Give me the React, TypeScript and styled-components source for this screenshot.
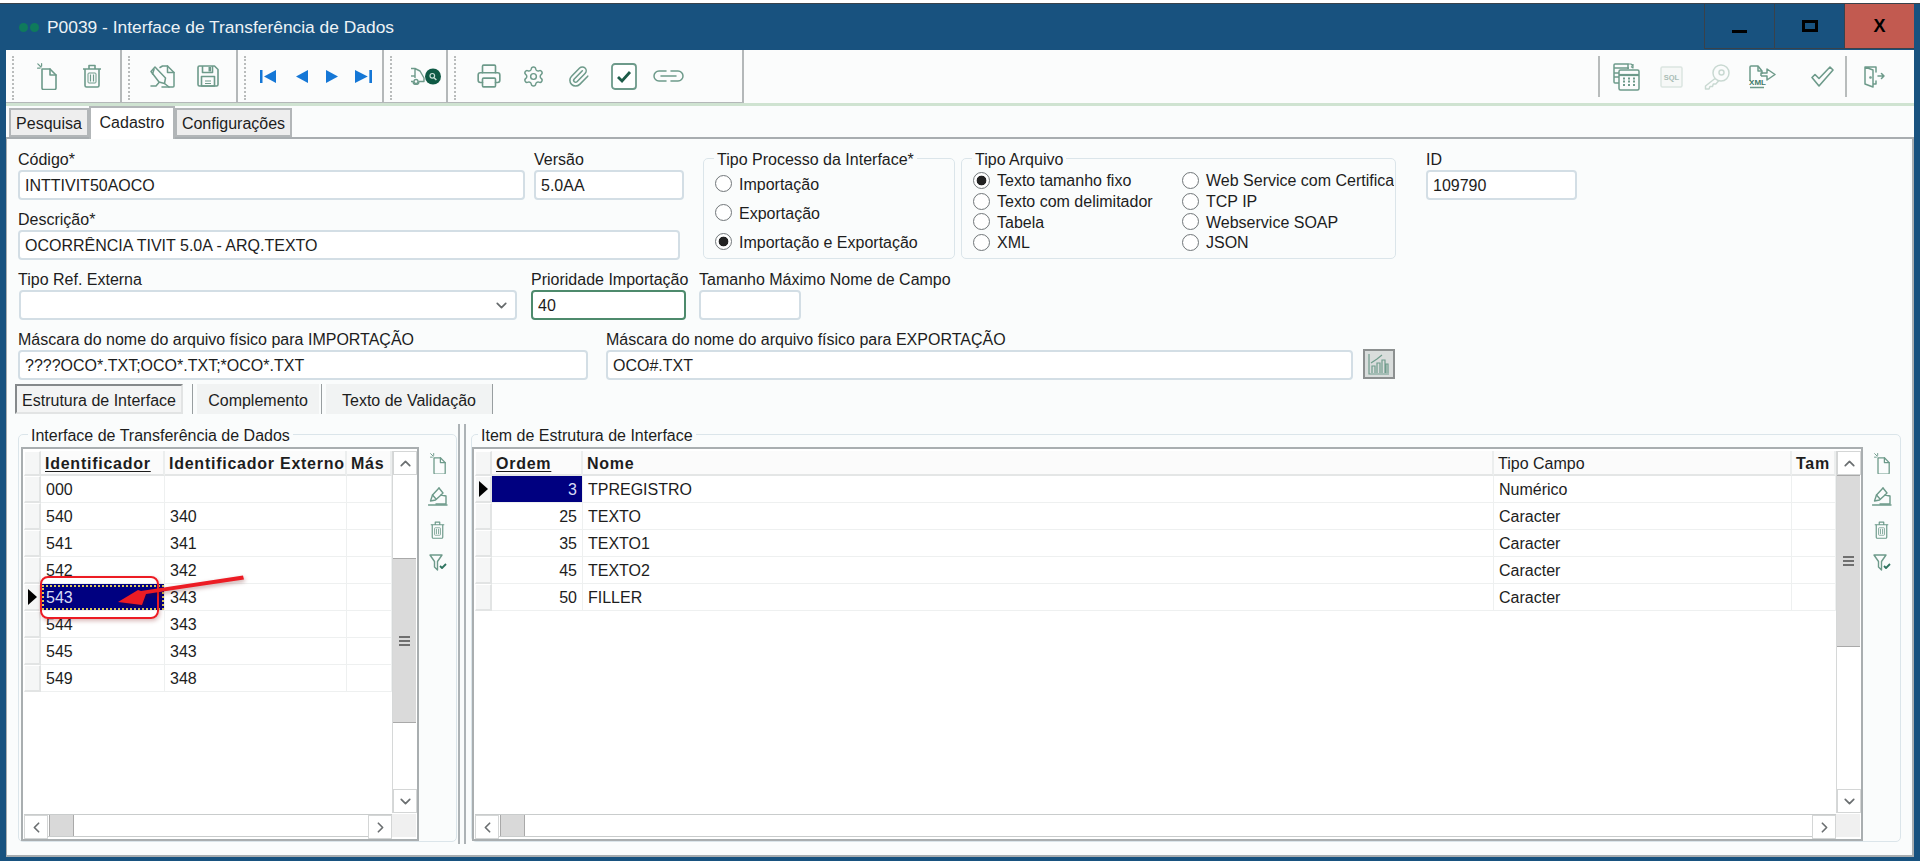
import React, { ReactElement } from 'react';
import styled, { createGlobalStyle } from 'styled-components';
import { ChevronDown, ChevronLeft, ChevronRight, ChevronUp, Paperclip, Printer, Settings } from 'lucide-react';

const GlobalStyle = createGlobalStyle`
  html, body {
    margin: 0;
    height: 861px;
    overflow: hidden;
    background: #ffffff;
  }
  * { box-sizing: border-box; }
`;

const GREEN = '#6d9a8a';
const PALE = '#c9d9d2';

const Screen = styled.div`
  position: relative;
  width: 1920px;
  height: 861px;
  padding-top: 3px;
  background: #ffffff;
  overflow: hidden;
  font-family: "Liberation Sans", Arial, sans-serif;
  font-size: 16px;
  color: #1d1d1d;
`;

const Window = styled.div`
  height: 858px;
  display: flex;
  flex-direction: column;
  background: #18527f;
  border-top: 1px solid #39424b;
  padding-bottom: 4px;
`;

const TitleBar = styled.div`
  height: 46px;
  flex: none;
  display: flex;
  align-items: center;
  padding-left: 19px;
  width: 1914px;
`;

const TitleDot = styled.span`
  width: 9px;
  height: 9px;
  border-radius: 50%;
  background: #0f7a5c;
  margin-right: 2px;
`;

const TitleText = styled.div`
  margin-left: 6px;
  font-size: 17.4px;
  color: #edf2f6;
  padding-top: 1px;
`;

const WindowButtons = styled.div`
  margin-left: auto;
  display: flex;
  height: 45px;
  align-self: flex-start;
`;

const WindowButton = styled.div<{ $close?: boolean }>`
  width: 70px;
  height: 45px;
  display: flex;
  align-items: center;
  justify-content: center;
  border-left: 1px solid #39424b;
  border-bottom: 1px solid #39424b;
  background: ${(p) => (p.$close ? '#c25a50' : 'transparent')};
  color: #000000;
  font-weight: 700;
  font-size: 18px;
`;

const MinGlyph = styled.span`
  width: 15px;
  height: 3px;
  margin-top: 10px;
  background: #000000;
`;

const MaxGlyph = styled.span`
  width: 16px;
  height: 12px;
  border: 3px solid #000000;
`;

const Body = styled.div`
  flex: 1;
  margin: 0 6px;
  display: flex;
  flex-direction: column;
  background: #fafcfc;
`;

const Toolbar = styled.div`
  height: 53px;
  flex: none;
  display: flex;
  background: #fbfcfc;
`;

const ToolGroup = styled.div<{ $w: number }>`
  width: ${(p) => p.$w}px;
  display: flex;
  align-items: center;
  border-right: 2px solid #b4b8b9;
  border-bottom: 1px solid #b4b8b9;
  padding-left: 6px;
`;

const Handle = styled.span<{ $gap: number }>`
  height: 44px;
  margin-top: 3px;
  width: 2px;
  border-left: 2px dotted #b9bcbc;
  margin-right: ${(p) => p.$gap}px;
`;

const ToolButton = styled.div<{ $w?: number; $pale?: boolean }>`
  width: ${(p) => p.$w ?? 45}px;
  height: 100%;
  flex: none;
  display: flex;
  align-items: center;
  justify-content: center;
  color: ${(p) => (p.$pale ? PALE : GREEN)};
`;

const ToolRight = styled.div`
  margin-left: auto;
  display: flex;
  align-items: center;
  padding-right: 17px;
`;

const ToolDivider = styled.span<{ $after: number }>`
  width: 2px;
  height: 41px;
  background: #b8bcbc;
  margin-right: ${(p) => p.$after}px;
`;

const ToolSpacer = styled.span<{ $w: number }>`
  width: ${(p) => p.$w}px;
`;

const GreenLine = styled.div`
  height: 3px;
  flex: none;
  background: #cfe3d1;
`;

const TabStrip = styled.div`
  height: 31px;
  flex: none;
  display: flex;
  align-items: flex-end;
  padding-left: 3px;
  background: #fafcfc;
  position: relative;
  z-index: 1;
`;

const Tab = styled.div<{ $active?: boolean; $w: number }>`
  width: ${(p) => p.$w}px;
  height: ${(p) => (p.$active ? '33px' : '29px')};
  margin-bottom: ${(p) => (p.$active ? '-2px' : '0')};
  display: flex;
  align-items: ${(p) => (p.$active ? 'flex-start' : 'center')};
  justify-content: center;
  padding-top: ${(p) => (p.$active ? '6px' : '3px')};
  border: 2px solid #b2b6b8;
  border-bottom: ${(p) => (p.$active ? 'none' : '2px solid #b2b6b8')};
  background: ${(p) => (p.$active ? '#ffffff' : '#eeeeee')};
`;

const Page = styled.div`
  flex: 1;
  display: flex;
  flex-direction: column;
  border: 2px solid #a8adb0;
  border-left-width: 1px;
  background: #fafcfc;
  padding: 10px 0 0 11px;
  min-height: 0;
`;

const FormTop = styled.div`
  display: flex;
  align-items: flex-start;
`;

const LeftColumn = styled.div`
  width: 664px;
  display: flex;
  flex-direction: column;
  gap: 9px;
`;

const FormRow = styled.div<{ $gap?: number; $top?: number }>`
  display: flex;
  gap: ${(p) => p.$gap ?? 9}px;
  margin-top: ${(p) => p.$top ?? 0}px;
`;

const Field = styled.div<{ $w: number; $left?: number }>`
  width: ${(p) => p.$w}px;
  margin-left: ${(p) => p.$left ?? 0}px;
  flex: none;
  display: flex;
  flex-direction: column;
  gap: 3px;
`;

const Label = styled.label`
  height: 18px;
  line-height: 21px;
  white-space: nowrap;
`;

const TextBox = styled.input<{ $focus?: boolean }>`
  width: 100%;
  height: 30px;
  padding: 2px 5px 0;
  margin: 0;
  font: inherit;
  color: #1d1d1d;
  outline: none;
  background: #ffffff;
  border: ${(p) => (p.$focus ? '2px solid #4d8a6c' : '2px solid #d3dee5')};
  border-radius: 4px;
`;

const SelectBox = styled.div`
  height: 30px;
  margin-left: 1px;
  display: flex;
  align-items: center;
  justify-content: flex-end;
  padding-right: 5px;
  background: #ffffff;
  border: 2px solid #d3dee5;
  border-radius: 4px;
  color: #666a6c;
`;

const ChartButton = styled.div<{ $left: number }>`
  width: 32px;
  height: 30px;
  flex: none;
  align-self: flex-end;
  margin: 0 0 1px ${(p) => p.$left}px;
  display: flex;
  align-items: center;
  justify-content: center;
  background: #d9dddc;
  border: 2px solid #8c9090;
`;

const Group = styled.fieldset<{ $w: number; $left: number }>`
  width: ${(p) => p.$w}px;
  height: 110px;
  flex: none;
  margin: 0 0 0 ${(p) => p.$left}px;
  padding: 2px 0 0 11px;
  border: 1.5px solid #dbe5ea;
  border-radius: 5px;
  min-width: 0;
  overflow: hidden;
`;

const Legend = styled.legend<{ $left?: number }>`
  height: 18px;
  line-height: 21px;
  padding: 0 3px;
  margin-left: ${(p) => p.$left ?? 8}px;
`;

const RadioRow = styled.div<{ $h: number }>`
  height: ${(p) => p.$h}px;
  display: flex;
  align-items: center;
  gap: 7px;
  white-space: nowrap;
  overflow: hidden;
`;

const RadioText = styled.span`
  padding-top: 2px;
`;

const RadioGrid = styled.div`
  display: grid;
  grid-template-columns: 209px 212px;
  grid-auto-rows: 20.7px;
  padding-top: 1px;
`;

const Radio = styled.span<{ $on?: boolean }>`
  width: 17px;
  height: 17px;
  flex: none;
  border-radius: 50%;
  border: 1px solid #72777a;
  background: radial-gradient(circle, ${(p) => (p.$on ? '#222 0 4.5px, #fff 5.2px' : '#fff 0 60%, #f0f0f0 100%')});
`;

const InnerTabs = styled.div`
  height: 30px;
  flex: none;
  margin: 4px 0 0 -3px;
  display: flex;
`;

const InnerTab = styled.div<{ $w: number; $left: number; $active?: boolean }>`
  width: ${(p) => p.$w}px;
  margin-left: ${(p) => p.$left}px;
  padding-top: 3px;
  display: flex;
  align-items: center;
  justify-content: center;
  background: ${(p) => (p.$active ? '#f3f4f4' : '#f1f3f3')};
  border-top: ${(p) => (p.$active ? '2px solid #85898b' : 'none')};
  border-left: ${(p) => (p.$active ? '2px solid #85898b' : 'none')};
  border-bottom: ${(p) => (p.$active ? '2px solid #e2e4e4' : 'none')};
  border-right: ${(p) => (p.$active ? '2px solid #e2e4e4' : 'none')};
`;

const InnerSep = styled.span<{ $left: number }>`
  width: 1px;
  flex: none;
  margin-left: ${(p) => p.$left}px;
  background: #989ea0;
`;

const Panes = styled.div`
  margin-top: 11px;
  height: 417px;
  display: flex;
`;

const Pane = styled.fieldset<{ $w: number; $pad: number }>`
  width: ${(p) => p.$w}px;
  height: 417px;
  flex: none;
  margin: 0;
  min-width: 0;
  padding: 4px 0 0 ${(p) => p.$pad}px;
  border: 1.5px solid #dbe5ea;
  border-radius: 5px;
  display: flex;
`;

const Splitter = styled.div`
  width: 8px;
  height: 420px;
  flex: none;
  margin: -1px 5px 0 1px;
  border-left: 2px solid #adb3b6;
  border-right: 2px solid #adb3b6;
`;

const Grid = styled.div<{ $w: number }>`
  width: ${(p) => p.$w}px;
  height: 394px;
  flex: none;
  display: grid;
  grid-template-columns: 1fr 24px;
  grid-template-rows: 1fr 24px;
  border: 2px solid #a9aeb0;
  padding: 2px 1px 2px 1px;
  background: #ffffff;
`;

const TableArea = styled.div`
  overflow: hidden;
  min-height: 0;
  background: #ffffff;
`;

const TableRow = styled.div<{ $h: number }>`
  height: ${(p) => p.$h}px;
  display: flex;
`;

const Indicator = styled.div`
  width: 17px;
  flex: none;
  display: flex;
  align-items: center;
  justify-content: center;
  background: #f5f6f6;
  border-top: 1px solid #ffffff;
  border-left: 1px solid #ffffff;
  border-bottom: 2px solid #e2e4e4;
  border-right: 2px solid #e2e4e4;
`;

const RowArrow = styled.span`
  width: 0;
  height: 0;
  border-top: 8px solid transparent;
  border-bottom: 8px solid transparent;
  border-left: 9px solid #000000;
`;

const Cell = styled.div<{ $w: number; $right?: boolean; $sel?: boolean; $focus?: boolean }>`
  width: ${(p) => p.$w}px;
  flex: none;
  display: flex;
  align-items: center;
  justify-content: ${(p) => (p.$right ? 'flex-end' : 'flex-start')};
  padding: 2px 5px 0;
  white-space: nowrap;
  overflow: hidden;
  color: ${(p) => (p.$sel ? '#d8dcf5' : '#1d1d1d')};
  background: ${(p) => (p.$sel ? '#000080' : '#ffffff')};
  border-right: 1px solid #eef0f0;
  border-bottom: 1px solid #eef0f0;
  outline: ${(p) => (p.$focus ? '2px dotted #d9c65a' : 'none')};
  outline-offset: -3px;
`;

const HeadCell = styled.div<{ $w: number; $bold?: boolean; $sorted?: boolean }>`
  width: ${(p) => p.$w}px;
  flex: none;
  display: flex;
  align-items: center;
  padding: 2px 4px 0;
  white-space: nowrap;
  overflow: hidden;
  background: #fbfbfb;
  font-weight: ${(p) => (p.$bold ? 700 : 400)};
  letter-spacing: ${(p) => (p.$bold ? '0.75px' : '0')};
  text-decoration: ${(p) => (p.$sorted ? 'underline' : 'none')};
  text-underline-offset: 2px;
  border-right: 2px solid #eceeee;
  border-bottom: 2px solid #e4e6e6;
`;

const VScroll = styled.div`
  display: flex;
  flex-direction: column;
  border-left: 1px solid #d6d8d8;
  min-height: 0;
`;

const HScroll = styled.div`
  display: flex;
  margin-top: 1px;
  border-top: 1px solid #c9cccc;
  border-bottom: 1px solid #c9cccc;
`;

const ScrollButton = styled.div`
  width: 24px;
  height: 24px;
  flex: none;
  display: flex;
  align-items: center;
  justify-content: center;
  background: #ffffff;
  color: #6b6f71;
  border: 1px solid #d4d6d6;
`;

const VThumb = styled.div<{ $h: number; $top: number }>`
  height: ${(p) => p.$h}px;
  margin-top: ${(p) => p.$top}px;
  flex: none;
  display: flex;
  align-items: center;
  justify-content: center;
  background: #dadada;
  border-top: 1px solid #a9a9a9;
  border-bottom: 1px solid #a9a9a9;
`;

const HThumb = styled.div`
  width: 25px;
  height: 100%;
  flex: none;
  margin-left: 1px;
  background: #d9d9d9;
  border-left: 1px solid #a9a9a9;
  border-right: 1px solid #a9a9a9;
`;

const Track = styled.div`
  flex: 1;
`;

const Grabber = styled.span`
  width: 11px;
  height: 10px;
  border-top: 2px solid #6f6f6f;
  border-bottom: 2px solid #6f6f6f;
  background: linear-gradient(#6f6f6f, #6f6f6f) center / 100% 2px no-repeat;
`;

const Corner = styled.div`
  background: #f0f0f0;
  margin-top: 1px;
`;

const SideTools = styled.div`
  flex: 1;
  display: flex;
  flex-direction: column;
  align-items: center;
  color: ${GREEN};
`;

const SideTool = styled.div`
  height: 33px;
  display: flex;
  align-items: center;
  justify-content: center;
`;

const RedBox = styled.div`
  position: absolute;
  left: 40px;
  top: 576px;
  width: 119px;
  height: 43px;
  border: 2px solid #ec1c24;
  border-radius: 8px;
  box-shadow: 1px 2px 4px rgba(120, 0, 0, 0.28);
`;

const RedArrow = styled.svg`
  position: absolute;
  left: 110px;
  top: 565px;
  filter: drop-shadow(1px 2px 2px rgba(90, 0, 0, 0.35));
`;

type IconProps = { w: number; color?: string };

const NewIcon = ({ w, color = GREEN }: IconProps) => (
  <svg width={w} viewBox="0 0 20 27" fill="none" stroke={color} strokeWidth="1.6" strokeLinejoin="round" strokeLinecap="round">
    <path d="M5 6h8l6 6v13a1.5 1.5 0 0 1-1.5 1.5h-11A1.5 1.5 0 0 1 5 25z" />
    <path d="M13 6v6h6" />
    <path d="M.8.8 4 4M4.6.6V3M.6 5.2H3" strokeWidth="1.2" />
  </svg>
);

const TrashIcon = ({ w, color = GREEN }: IconProps) => (
  <svg width={w} viewBox="0 0 20 24" fill="none" stroke={color} strokeWidth="1.6" strokeLinejoin="round">
    <path d="M1 5h18M7 5V1.5h6V5" />
    <path d="M3 5v16.5A1.5 1.5 0 0 0 4.5 23h11a1.5 1.5 0 0 0 1.5-1.5V5" />
    <rect x="6" y="9" width="8" height="10" rx="1" strokeWidth="1" />
    <path d="M8.5 10.5v7M11.5 10.5v7" strokeWidth="1.2" />
  </svg>
);

const EditIcon = ({ w, color = GREEN }: IconProps) => (
  <svg width={w} viewBox="0 0 25 23" fill="none" stroke={color} strokeWidth="1.5" strokeLinejoin="round" strokeLinecap="round">
    <path d="M10 2.5 12.5 1h5L24 7.5V21a1 1 0 0 1-1 1H12" />
    <path d="M17.5 1v6.5H24" />
    <path d="M1 6.5 5 2l10.5 11-1 5.5-5.5-1.5z" />
    <path d="M4 4.5 2.5 9M9 17.5 6 21H1" />
    <path d="M14.5 18.5 19 22" />
  </svg>
);

const SideEditIcon = ({ w, color = GREEN }: IconProps) => (
  <svg width={w} viewBox="0 0 20 19" fill="none" stroke={color} strokeWidth="1.4" strokeLinejoin="round" strokeLinecap="round">
    <path d="M11 1 15 6l-2 2 5 1v8H8" />
    <path d="M11 1 4.5 8 2.5 14l5-1L13 8" />
    <path d="M4.5 8 8 12M.5 18H19" />
  </svg>
);

const SaveIcon = ({ w, color = GREEN }: IconProps) => (
  <svg width={w} viewBox="0 0 22 22" fill="none" stroke={color} strokeWidth="1.6" strokeLinejoin="round">
    <path d="M1 2.5A1.5 1.5 0 0 1 2.5 1h15L21 4.5v15a1.5 1.5 0 0 1-1.5 1.5h-17A1.5 1.5 0 0 1 1 19.5z" />
    <path d="M5.5 1v6.5h10V1" />
    <rect x="11.5" y="2" width="2.5" height="4.5" fill={color} stroke="none" />
    <rect x="4.5" y="11.5" width="13" height="9.5" />
    <path d="M8 16h6M8 18.5h6" strokeWidth="1" />
  </svg>
);

const Nav = ({ w, d }: { w: number; d: string }) => (
  <svg width={w} height="13" viewBox="0 0 16 13" fill="#1577d6" preserveAspectRatio="none">
    <path d={d} />
  </svg>
);

const SearchCartIcon = () => (
  <svg width="31" height="18" viewBox="0 0 31 18" fill="none" stroke={GREEN} strokeWidth="1.4" strokeLinejoin="round">
    <path d="M1 1.5h4l5 2.5 4 7v3.5H9a3 3 0 0 1-6 0H1M5 1.5V11" />
    <circle cx="6" cy="14.5" r="2" />
    <path d="M1 9h4" />
    <circle cx="23" cy="9.5" r="8" fill="#0f5a45" stroke="none" />
    <circle cx="22.3" cy="8.8" r="2.3" stroke="#c7ded6" strokeWidth="1.2" />
    <path d="m24 10.7 2.4 2.4" stroke="#c7ded6" strokeWidth="1.4" />
  </svg>
);

const CheckBoxIcon = () => (
  <svg width="26" height="27" viewBox="0 0 26 27" fill="none">
    <rect x="1" y="1" width="24" height="25" rx="3" stroke={GREEN} strokeWidth="1.8" fill="#ffffff" />
    <path d="m7 14 4 4 8-9" stroke="#1c5b48" strokeWidth="2.8" />
  </svg>
);

const LinkIcon = () => (
  <svg width="31" height="12" viewBox="0 0 31 12" fill="none" stroke={GREEN} strokeWidth="1.5" strokeLinecap="round">
    <path d="M13 1H6a5 5 0 0 0 0 10h7M18 1h7a5 5 0 0 1 0 10h-7M8 6h15" />
  </svg>
);

const TableIcon = () => (
  <svg width="27" height="28" viewBox="0 0 27 28" fill="none" stroke={GREEN} strokeWidth="1.5" strokeLinejoin="round">
    <path d="M6 20H2a1 1 0 0 1-1-1V2a1 1 0 0 1 1-1h13v5" />
    <path d="M1 5h15M1 10h5M1 14h5" />
    <path d="M15 1h3l2 2M20 1v4l-2-1.5" strokeWidth="1.2" />
    <rect x="6" y="7" width="20" height="20" rx="1.5" />
    <path d="M6 12h20" strokeWidth="2.2" />
    <path d="M10 15.5h2M15 15.5h2M20 15.5h2M10 18.5h2M15 18.5h2M20 18.5h2M10 22h2M15 22h2M20 22h2" strokeWidth="2.2" />
  </svg>
);

const SqlIcon = () => (
  <svg width="23" height="22" viewBox="0 0 23 22" fill="none">
    <rect x="1" y="1" width="21" height="20" rx="1.5" stroke="#dbe5e1" strokeWidth="1.5" fill="#f6f8f7" />
    <text x="11.5" y="14" textAnchor="middle" fontSize="7.5" fontWeight="700" fontFamily="Liberation Sans, sans-serif" fill="#a9bdb5">SQL</text>
  </svg>
);

const KeyIcon = () => (
  <svg width="26" height="26" viewBox="0 0 26 26" fill="none" stroke={PALE} strokeWidth="1.5" strokeLinejoin="round">
    <circle cx="17" cy="9" r="8" />
    <circle cx="17.5" cy="8.5" r="2.5" />
    <path d="M11 14.5 1.5 22v3h3.5l1-2.5h2.5l.8-2.5h2.5l3.2-3.5" />
  </svg>
);

const XmlIcon = () => (
  <svg width="29" height="24" viewBox="0 0 29 24" fill="none" stroke={GREEN} strokeWidth="1.5" strokeLinejoin="round">
    <path d="M3 16V2a1 1 0 0 1 1-1h7l4 5v3M3 22.5h14" />
    <path d="M11 1v5h4" />
    <path d="M14 11V8h6V4l8 5.5-8 5.5v-4h-6" />
    <text x="10.5" y="20" textAnchor="middle" fontSize="8" fontWeight="700" fontFamily="Liberation Sans, sans-serif" fill="#3f7a68" stroke="none">XML</text>
  </svg>
);

const OutlineCheckIcon = () => (
  <svg width="23" height="21" viewBox="0 0 23 21" fill="none" stroke={GREEN} strokeWidth="1.6" strokeLinejoin="round">
    <path d="M1 11.5 4 8.5l4 4L19 1l3 3L8 20z" />
  </svg>
);

const DoorIcon = () => (
  <svg width="21" height="22" viewBox="0 0 21 22" fill="none" stroke={GREEN} strokeWidth="1.5" strokeLinejoin="round" strokeLinecap="round">
    <path d="M1 1v17l8 3V4zM1 1h11v5M9 18h3v-3" />
    <path d="M14 10h6M17.5 7.5 20 10l-2.5 2.5" />
    <circle cx="6.5" cy="11.5" r=".6" />
  </svg>
);

const FilterIcon = ({ w, color = GREEN }: IconProps) => (
  <svg width={w} viewBox="0 0 18 17" fill="none" stroke={color} strokeWidth="1.4" strokeLinejoin="round">
    <path d="M1 1h12L8.5 7.5V16L5.5 13V7.5z" />
    <path d="m11 12 2 2 4-4" stroke="#2f7460" strokeWidth="1.8" />
  </svg>
);

const ChartIcon = () => (
  <svg width="22" height="22" viewBox="0 0 22 22" fill="none" stroke="#6f9c8c" strokeWidth="1.2">
    <path d="M1 1v20h20" />
    <path d="M4 20v-7h3v7M9 20V10h3v10M14 20V7h3v13M18 20v-9h2v9M3 10l6-4 5-4" />
  </svg>
);

const ScrollV = ({ thumbTop, thumbH }: { thumbTop: number; thumbH: number }) => (
  <VScroll>
    <ScrollButton><ChevronUp size={17} strokeWidth={2.4} /></ScrollButton>
    <VThumb $top={thumbTop} $h={thumbH}><Grabber /></VThumb>
    <Track />
    <ScrollButton><ChevronDown size={17} strokeWidth={2.4} /></ScrollButton>
  </VScroll>
);

const ScrollH = () => (
  <HScroll>
    <ScrollButton><ChevronLeft size={17} strokeWidth={2.4} /></ScrollButton>
    <HThumb />
    <Track />
    <ScrollButton><ChevronRight size={17} strokeWidth={2.4} /></ScrollButton>
  </HScroll>
);

const Side = () => (
  <SideTools>
    <SideTool><NewIcon w={16} /></SideTool>
    <SideTool><SideEditIcon w={20} /></SideTool>
    <SideTool><TrashIcon w={15} /></SideTool>
    <SideTool><FilterIcon w={18} /></SideTool>
  </SideTools>
);

const leftRows = [['000', ''], ['540', '340'], ['541', '341'], ['542', '342'], ['543', '343'], ['544', '343'], ['545', '343'], ['549', '348']];
const rightRows = [
  ['3', 'TPREGISTRO', 'Numérico'],
  ['25', 'TEXTO', 'Caracter'],
  ['35', 'TEXTO1', 'Caracter'],
  ['45', 'TEXTO2', 'Caracter'],
  ['50', 'FILLER', 'Caracter'],
];
const process = ['Importação', 'Exportação', 'Importação e Exportação'];
const fileTypes = ['Texto tamanho fixo', 'Web Service com Certifica', 'Texto com delimitador', 'TCP IP', 'Tabela', 'Webservice SOAP', 'XML', 'JSON'];

export default function App(): ReactElement {
  return (
    <Screen>
      <GlobalStyle />
      <Window>
        <TitleBar>
          <TitleDot />
          <TitleDot />
          <TitleText>P0039 - Interface de Transferência de Dados</TitleText>
          <WindowButtons>
            <WindowButton><MinGlyph /></WindowButton>
            <WindowButton><MaxGlyph /></WindowButton>
            <WindowButton $close>X</WindowButton>
          </WindowButtons>
        </TitleBar>
        <Body>
          <Toolbar>
            <ToolGroup $w={116}>
              <Handle $gap={10} />
              <ToolButton><NewIcon w={20} /></ToolButton>
              <ToolButton><TrashIcon w={20} /></ToolButton>
            </ToolGroup>
            <ToolGroup $w={116}>
              <Handle $gap={10} />
              <ToolButton><EditIcon w={25} /></ToolButton>
              <ToolButton><SaveIcon w={22} /></ToolButton>
            </ToolGroup>
            <ToolGroup $w={146}>
              <Handle $gap={5} />
              <ToolButton $w={34}><Nav w={16} d="M0 0h2.5v13H0zM16 0v13L4 6.5z" /></ToolButton>
              <ToolButton $w={34}><Nav w={12} d="M16 0v13L0 6.5z" /></ToolButton>
              <ToolButton $w={26}><Nav w={12} d="M0 0v13l16-6.5z" /></ToolButton>
              <ToolButton $w={36}><Nav w={17} d="M0 0v13l12-6.5zM13.5 0H16v13h-2.5z" /></ToolButton>
            </ToolGroup>
            <ToolGroup $w={64}>
              <Handle $gap={14} />
              <ToolButton $w={38}><SearchCartIcon /></ToolButton>
            </ToolGroup>
            <ToolGroup $w={296}>
              <Handle $gap={10} />
              <ToolButton><Printer size={26} strokeWidth={1.5} /></ToolButton>
              <ToolButton><Settings size={23} strokeWidth={1.5} /></ToolButton>
              <ToolButton><Paperclip size={23} strokeWidth={1.6} /></ToolButton>
              <ToolButton><CheckBoxIcon /></ToolButton>
              <ToolButton><LinkIcon /></ToolButton>
            </ToolGroup>
            <ToolRight>
              <ToolDivider $after={4} />
              <ToolButton><TableIcon /></ToolButton>
              <ToolButton><SqlIcon /></ToolButton>
              <ToolButton $pale><KeyIcon /></ToolButton>
              <ToolButton><XmlIcon /></ToolButton>
              <ToolSpacer $w={16} />
              <ToolButton><OutlineCheckIcon /></ToolButton>
              <ToolDivider $after={5} />
              <ToolButton><DoorIcon /></ToolButton>
            </ToolRight>
          </Toolbar>
          <GreenLine />
          <TabStrip>
            <Tab $w={80}>Pesquisa</Tab>
            <Tab $w={86} $active>Cadastro</Tab>
            <Tab $w={117}>Configurações</Tab>
          </TabStrip>
          <Page>
            <FormTop>
              <LeftColumn>
                <FormRow>
                  <Field $w={507}>
                    <Label>Código*</Label>
                    <TextBox readOnly value="INTTIVIT50AOCO" />
                  </Field>
                  <Field $w={150}>
                    <Label>Versão</Label>
                    <TextBox readOnly value="5.0AA" />
                  </Field>
                </FormRow>
                <FormRow>
                  <Field $w={662}>
                    <Label>Descrição*</Label>
                    <TextBox readOnly value="OCORRÊNCIA TIVIT 5.0A - ARQ.TEXTO" />
                  </Field>
                </FormRow>
              </LeftColumn>
              <Group $w={252} $left={21}>
                <Legend $left={-1}>Tipo Processo da Interface*</Legend>
                {process.map((t, i) => (
                  <RadioRow key={t} $h={29}>
                    <Radio $on={i === 2} />
                    <RadioText>{t}</RadioText>
                  </RadioRow>
                ))}
              </Group>
              <Group $w={435} $left={6}>
                <Legend $left={-1}>Tipo Arquivo</Legend>
                <RadioGrid>
                  {fileTypes.map((t, i) => (
                    <RadioRow key={t} $h={20.7}>
                      <Radio $on={i === 0} />
                      <RadioText>{t}</RadioText>
                    </RadioRow>
                  ))}
                </RadioGrid>
              </Group>
              <Field $w={151} $left={30}>
                <Label>ID</Label>
                <TextBox readOnly value="109790" />
              </Field>
            </FormTop>
            <FormRow $gap={14} $top={9}>
              <Field $w={499}>
                <Label>Tipo Ref. Externa</Label>
                <SelectBox><ChevronDown size={17} strokeWidth={2.4} /></SelectBox>
              </Field>
              <Field $w={155}>
                <Label>Prioridade Importação</Label>
                <TextBox $focus readOnly value="40" />
              </Field>
              <Field $w={102} $left={-1}>
                <Label>Tamanho Máximo Nome de Campo</Label>
                <TextBox readOnly value="" />
              </Field>
            </FormRow>
            <FormRow $gap={18} $top={9}>
              <Field $w={570}>
                <Label>Máscara do nome do arquivo físico para IMPORTAÇÃO</Label>
                <TextBox readOnly value="????OCO*.TXT;OCO*.TXT;*OCO*.TXT" />
              </Field>
              <Field $w={747}>
                <Label>Máscara do nome do arquivo físico para EXPORTAÇÃO</Label>
                <TextBox readOnly value="OCO#.TXT" />
              </Field>
              <ChartButton $left={-8}><ChartIcon /></ChartButton>
            </FormRow>
            <InnerTabs>
              <InnerTab $w={168} $left={0} $active>Estrutura de Interface</InnerTab>
              <InnerSep $left={9} />
              <InnerTab $w={122} $left={4}>Complemento</InnerTab>
              <InnerSep $left={2} />
              <InnerTab $w={166} $left={4}>Texto de Validação</InnerTab>
              <InnerSep $left={0} />
            </InnerTabs>
            <Panes>
              <Pane $w={439} $pad={2}>
                <Legend $left={7}>Interface de Transferência de Dados</Legend>
                <Grid $w={398}>
                  <TableArea>
                    <TableRow $h={25}>
                      <Indicator />
                      <HeadCell $w={124} $bold $sorted>Identificador</HeadCell>
                      <HeadCell $w={182} $bold>Identificador Externo</HeadCell>
                      <HeadCell $w={45} $bold>Más</HeadCell>
                    </TableRow>
                    {leftRows.map(([a, b], i) => (
                      <TableRow key={a} $h={27}>
                        <Indicator>{i === 4 && <RowArrow />}</Indicator>
                        <Cell $w={124} $sel={i === 4} $focus={i === 4}>{a}</Cell>
                        <Cell $w={182}>{b}</Cell>
                        <Cell $w={45} />
                      </TableRow>
                    ))}
                  </TableArea>
                  <ScrollV thumbTop={83} thumbH={165} />
                  <ScrollH />
                  <Corner />
                </Grid>
                <Side />
              </Pane>
              <Splitter />
              <Pane $w={1430} $pad={0}>
                <Legend $left={6}>Item de Estrutura de Interface</Legend>
                <Grid $w={1391}>
                  <TableArea>
                    <TableRow $h={25}>
                      <Indicator />
                      <HeadCell $w={91} $bold $sorted>Ordem</HeadCell>
                      <HeadCell $w={911} $bold>Nome</HeadCell>
                      <HeadCell $w={298}>Tipo Campo</HeadCell>
                      <HeadCell $w={44} $bold>Tam</HeadCell>
                    </TableRow>
                    {rightRows.map(([o, n, t], i) => (
                      <TableRow key={n} $h={27}>
                        <Indicator>{i === 0 && <RowArrow />}</Indicator>
                        <Cell $w={91} $right $sel={i === 0}>{o}</Cell>
                        <Cell $w={911}>{n}</Cell>
                        <Cell $w={298}>{t}</Cell>
                        <Cell $w={44} />
                      </TableRow>
                    ))}
                  </TableArea>
                  <ScrollV thumbTop={0} thumbH={172} />
                  <ScrollH />
                  <Corner />
                </Grid>
                <Side />
              </Pane>
            </Panes>
          </Page>
        </Body>
      </Window>
      <RedBox />
      <RedArrow width="140" height="50" viewBox="0 0 140 50">
        <path d="M133 10.5 134 14.5 36 29 32 40 8 37 28 25 31 26z" fill="#ec1c24" />
      </RedArrow>
    </Screen>
  );
}
